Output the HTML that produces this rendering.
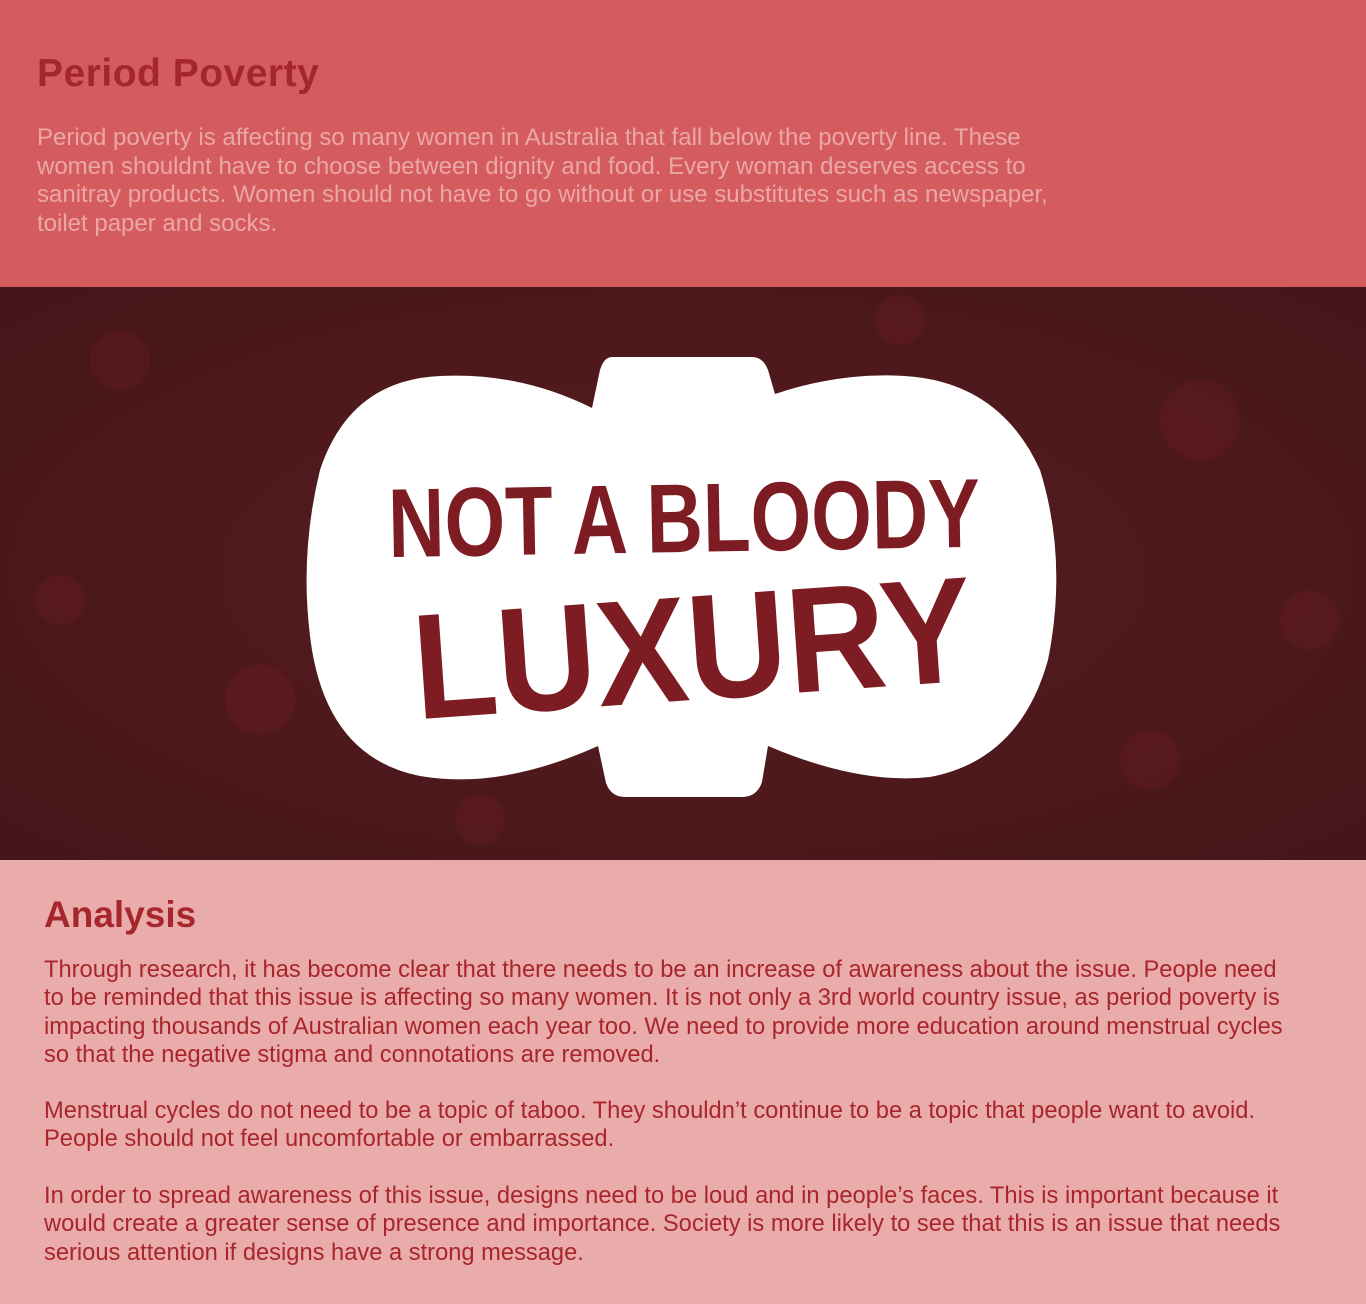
<!DOCTYPE html>
<html><head><meta charset="utf-8"><style>
html,body{margin:0;padding:0}
body{width:1366px;height:1304px;overflow:hidden;font-family:"Liberation Sans",sans-serif;}
.top{position:absolute;left:0;top:0;width:1366px;height:287px;background:#d45c5e}
.top h1{position:absolute;left:37px;top:52px;margin:0;font-size:39px;font-weight:bold;color:#a5262b;letter-spacing:0.5px}
.top p{position:absolute;left:37px;top:124px;margin:0;font-size:24px;line-height:28.5px;color:#eba6a6;white-space:nowrap}
.img{position:absolute;left:0;top:287px;width:1366px;height:573px;background:#4a1a1e}
.bot{position:absolute;left:0;top:860px;width:1366px;height:444px;background:#eaabab;color:#a8262b}
.bot h2{position:absolute;left:44px;top:34px;margin:0;font-size:37px;font-weight:bold;color:#a5262b}
.bot p{position:absolute;left:44px;margin:0;font-size:23.7px;line-height:28.3px;white-space:nowrap}
</style></head><body>
<div class="top">
<h1>Period Poverty</h1>
<p>Period poverty is affecting so many women in Australia that fall below the poverty line. These<br>women shouldnt have to choose between dignity and food. Every woman deserves access to<br>sanitray products. Women should not have to go without or use substitutes such as newspaper,<br>toilet paper and socks.</p>
</div>
<div class="img">
<svg width="1366" height="573" viewBox="0 287 1366 573">
<defs>
<radialGradient id="g" cx="50%" cy="50%" r="70%"><stop offset="0" stop-color="#5a1c20"/><stop offset="1" stop-color="#441619"/></radialGradient>
</defs>
<rect x="0" y="287" width="1366" height="573" fill="url(#g)"/>
<g fill="#8a2025" opacity="0.18">
<circle cx="120" cy="360" r="30"/><circle cx="260" cy="700" r="35"/><circle cx="1200" cy="420" r="40"/><circle cx="1150" cy="760" r="30"/><circle cx="60" cy="600" r="25"/><circle cx="1310" cy="620" r="30"/><circle cx="480" cy="820" r="25"/><circle cx="900" cy="320" r="25"/>
</g>
<path fill="#fff" d="M612 357 H752 Q763 357 768 370 L775 394 Q840 372 905 376 Q1000 382 1040 470 Q1068 560 1048 660 Q1020 760 930 777 Q860 785 768 746 L762 782 Q757 797 742 797 H625 Q611 797 606 783 L598 746 Q500 790 420 776 Q330 758 312 650 Q298 560 320 470 Q350 380 440 376 Q520 372 592 408 L600 370 Q604 357 612 357 Z"/>
<g font-family="'Liberation Sans',sans-serif" font-weight="bold" fill="#7d1c22">
<text x="388" y="552" font-size="98" textLength="592" lengthAdjust="spacingAndGlyphs" transform="rotate(-1 680 510)">NOT A BLOODY</text>
<text x="412" y="700" font-size="150" textLength="560" lengthAdjust="spacingAndGlyphs" transform="rotate(-4 690 640)">LUXURY</text>
</g>
</svg>
</div>
<div class="bot">
<h2>Analysis</h2>
<p style="top:96px">Through research, it has become clear that there needs to be an increase of awareness about the issue. People need<br>to be reminded that this issue is affecting so many women. It is not only a 3rd world country issue, as period poverty is<br>impacting thousands of Australian women each year too. We need to provide more education around menstrual cycles<br>so that the negative stigma and connotations are removed.</p>
<p style="top:237px">Menstrual cycles do not need to be a topic of taboo. They shouldn’t continue to be a topic that people want to avoid.<br>People should not feel uncomfortable or embarrassed.</p>
<p style="top:322px">In order to spread awareness of this issue, designs need to be loud and in people’s faces. This is important because it<br>would create a greater sense of presence and importance. Society is more likely to see that this is an issue that needs<br>serious attention if designs have a strong message.</p>
</div>
</body></html>
